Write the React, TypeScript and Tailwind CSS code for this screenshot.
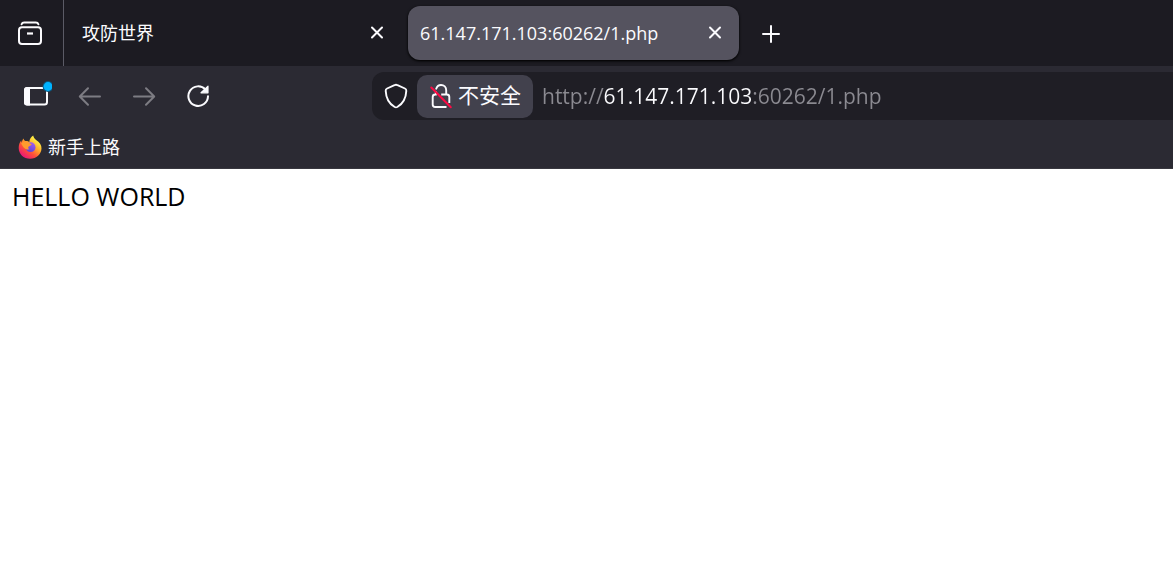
import type { ReactNode } from 'react';

const TABS = [
  { id: 'adworld', title: '攻防世界', active: false },
  { id: 'php', title: '61.147.171.103:60262/1.php', active: true },
];

function CloseIcon() {
  return (
    <svg width="24" height="24" viewBox="0 0 24 24" fill="none" stroke="currentColor" strokeWidth="2" strokeLinecap="round">
      <path d="M7 6.500l10 10M17 6.500l-10 10" />
    </svg>
  );
}

function HistoryIcon() {
  return (
    <svg width="26" height="26" viewBox="0 0 26 26" fill="none" stroke="currentColor" strokeWidth="2" strokeLinecap="round">
      <path d="M4.600 4.200Q5.200 2.400 7.200 2.400H18.800Q20.800 2.400 21.400 4.200" />
      <rect x="2" y="7.300" width="22" height="16.700" rx="3" />
      <path d="M10 13.500h6" strokeLinecap="butt" strokeWidth="2.200" />
    </svg>
  );
}

function SidebarIcon() {
  return (
    <svg width="32" height="30" viewBox="0 0 32 30" fill="none">
      <rect x="5" y="7" width="22" height="16.500" rx="2.500" stroke="currentColor" strokeWidth="2" />
      <path d="M7 6h3v18.500H7a3 3 0 0 1-3-3V9a3 3 0 0 1 3-3z" fill="currentColor" />
      <circle cx="28" cy="5.500" r="5.400" fill="#0a5c86" />
      <circle cx="28" cy="5.500" r="4.400" fill="#00b3ff" />
    </svg>
  );
}

function BackIcon() {
  return (
    <svg width="24" height="24" viewBox="0 0 24 24" fill="none" stroke="currentColor" strokeWidth="2" strokeLinecap="round" strokeLinejoin="round">
      <path d="M22 12.500H2M10 4.300l-8.200 8.200L10 20.700" />
    </svg>
  );
}

function ForwardIcon() {
  return (
    <svg width="24" height="24" viewBox="0 0 24 24" fill="none" stroke="currentColor" strokeWidth="2" strokeLinecap="round" strokeLinejoin="round">
      <path d="M2 12.500h20M14 4.300l8.200 8.200-8.200 8.200" />
    </svg>
  );
}

function ReloadIcon() {
  return (
    <svg width="24" height="24" viewBox="0 0 24 24" fill="none" stroke="currentColor" strokeWidth="2" strokeLinecap="round">
      <path d="M22 12.300A9.800 9.800 0 1 1 19.500 5.600" />
      <path d="M22 2.200v6.600h-7z" fill="currentColor" strokeWidth="1.200" strokeLinejoin="round" />
    </svg>
  );
}

function ShieldIcon() {
  return (
    <svg width="24" height="26" viewBox="0 0 24 26" fill="none" stroke="currentColor" strokeWidth="1.900" strokeLinejoin="round">
      <path d="M12 1.700c.6 0 1 .2 1.500.5l7.400 3.300c1.100.5 1.500 1.200 1.400 2.400C22 14.500 19.500 20.500 13.300 24c-1 .5-1.700.5-2.600 0C4.500 20.500 2 14.500 1.700 7.900c-.1-1.200.3-1.900 1.400-2.400l7.400-3.300c.5-.3.9-.5 1.500-.5z" />
    </svg>
  );
}

function InsecureIcon() {
  return (
    <svg width="24" height="26" viewBox="0 0 24 26" fill="none" strokeWidth="1.900">
      <g stroke="#fbfbfe">
        <path d="M7.200 5.700C8 3.400 9.700 2 12 2c3 0 5.200 2.300 5.200 5.200v3.500" strokeLinecap="round" />
        <path d="M6.800 8.200v3.300H6.200a2.500 2.500 0 0 0-2.500 2.500v7.500a2.500 2.500 0 0 0 2.500 2.500H17.500" />
        <path d="M12.200 11.500h5.600a2.500 2.500 0 0 1 2.500 2.500v6" />
      </g>
      <path d="M2.300 4.500l19.500 19.700" stroke="#ff0a45" strokeWidth="2" strokeLinecap="round" />
    </svg>
  );
}

function FirefoxLogo() {
  return (
    <svg width="24" height="24" viewBox="0 0 24 24">
      <defs>
        <linearGradient id="fx-body" x1="0.85" y1="0.1" x2="0.2" y2="0.95">
          <stop offset="0.1" stopColor="#fff044" />
          <stop offset="0.4" stopColor="#ffa32b" />
          <stop offset="0.65" stopColor="#ff5138" />
          <stop offset="1" stopColor="#e8127c" />
        </linearGradient>
        <linearGradient id="fx-globe" x1="0.7" y1="0" x2="0.3" y2="1">
          <stop offset="0" stopColor="#a45cf0" />
          <stop offset="1" stopColor="#5b45d6" />
        </linearGradient>
      </defs>
      <path
        d="M15.200.5c.3 2 1.400 3.200 2.900 4.500 3.400 2.300 5.600 4.900 5.400 8.600-.3 6-5 10.200-11.300 10.200C5.500 23.800.8 19.200.7 13.100c0-3.300.9-5.600 2.500-7.500l.4 2.100C4.100 6.200 4.800 4.500 5.500 3.600c.2 1.100.8 2 1.800 2.500 1.500-.3 2.900.1 4 .9C11.500 4.200 12.900 2 15.200.5z"
        fill="url(#fx-body)"
      />
      <circle cx="12.600" cy="12.200" r="4.900" fill="url(#fx-globe)" />
      <path d="M3.200 8.200c2-1.800 5.700-2.500 8-.6.400 1 1.500 1.300 2.500 1.500-.3 1.300-1.600 1.800-2.900 2.400-1 .6-.7 2.200.8 2.800-3.300.7-6.400-1-8.400-6.100z" fill="#ff9b2e" />
    </svg>
  );
}

function ToolButton({ label, disabled, children }: { label: string; disabled?: boolean; children: ReactNode }) {
  return (
    <button
      type="button"
      aria-label={label}
      disabled={disabled}
      className="flex h-12 w-12 items-center justify-center rounded-lg text-[#fbfbfe] disabled:text-[#7d7c83]"
    >
      {children}
    </button>
  );
}

export default function App() {
  return (
    <div className="min-h-screen bg-white font-['Open_Sans','Noto_Sans_CJK_SC',sans-serif]">
      <header className="bg-[#2b2a33] text-[#fbfbfe]">
        <div className="flex h-[66px] items-center bg-[#1c1b22]">
          <div className="flex h-full w-16 shrink-0 items-center justify-center border-r border-[#5b5b66] pr-1">
            <button type="button" aria-label="最近浏览">
              <HistoryIcon />
            </button>
          </div>
          <nav className="flex min-w-0 gap-[7px] pl-1.5">
            {TABS.map((tab) => (
              <div
                key={tab.id}
                className={`flex h-[54px] w-[331px] min-w-0 items-center justify-between rounded-xl px-3 ${tab.active ? 'bg-[#55535f] shadow-sm shadow-black' : ''}`}
              >
                <button type="button" className="min-w-0 truncate text-lg">
                  {tab.title}
                </button>
                <button type="button" aria-label="关闭标签页">
                  <CloseIcon />
                </button>
              </div>
            ))}
          </nav>
          <button type="button" aria-label="新建标签页" className="ml-5">
            <svg width="24" height="24" viewBox="0 0 24 24" fill="none" stroke="currentColor" strokeWidth="2" strokeLinecap="round">
              <path d="M12 5v16M4 13h16" />
            </svg>
          </button>
        </div>

        <div className="flex h-[60px] items-center pl-3">
          <div className="flex shrink-0 gap-1.5">
            <ToolButton label="侧栏"><SidebarIcon /></ToolButton>
            <ToolButton label="后退" disabled><BackIcon /></ToolButton>
            <ToolButton label="前进" disabled><ForwardIcon /></ToolButton>
            <ToolButton label="刷新"><ReloadIcon /></ToolButton>
          </div>
          <div className="ml-[150px] flex h-12 min-w-0 flex-1 items-center rounded-l-xl bg-[#1f1e25] pl-3">
            <button type="button" aria-label="跟踪保护">
              <ShieldIcon />
            </button>
            <button type="button" className="ml-[9px] flex h-[43px] w-[116px] shrink-0 items-center gap-[5px] rounded-[10px] bg-[#42414d] pl-3 text-[21px]">
              <InsecureIcon />
              不安全
            </button>
            {/* host part is brighter than the scheme and path */}
            <input
              type="text"
              aria-label="地址"
              defaultValue="http://61.147.171.103:60262/1.php"
              className="ml-[9px] h-10 min-w-0 flex-1 bg-[linear-gradient(to_right,#8b8a91_62px,#fbfbfe_62px,#fbfbfe_211px,#8b8a91_211px)] bg-clip-text text-[21px] text-transparent outline-none"
            />
          </div>
        </div>

        <div className="flex h-[43px] items-center border-b border-[#38373f] pl-[18px]">
          <a href="#" className="flex items-center gap-1.5 text-lg">
            <FirefoxLogo />
            新手上路
          </a>
        </div>
      </header>

      <main className="px-3 py-[9px] text-[25px] leading-9 text-black">HELLO WORLD</main>
    </div>
  );
}
